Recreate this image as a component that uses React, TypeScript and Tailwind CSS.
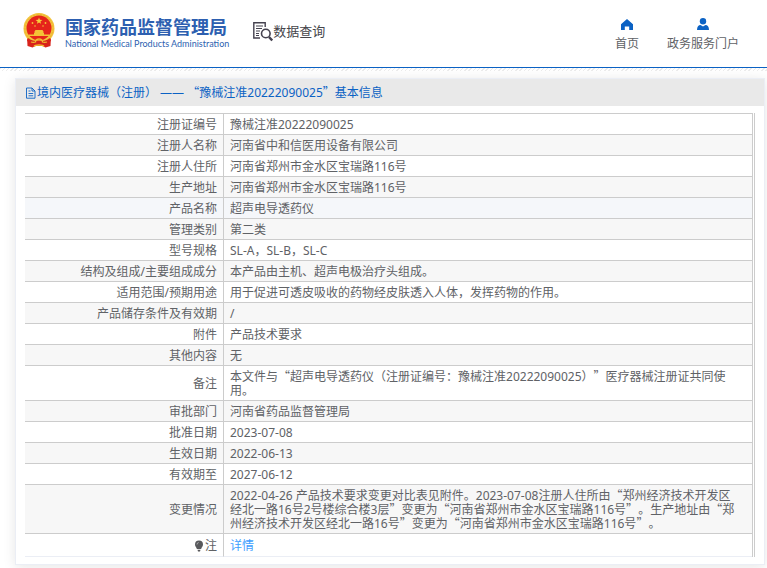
import type { ReactNode } from "react";

const CJK = "font-['Noto_Sans_CJK_SC','Noto_Sans',sans-serif]";

function Wide({ children }: { children: ReactNode }) {
  return <span className={`leading-none ${CJK}`}>{children}</span>;
}

function Emblem() {
  return (
    <svg viewBox="0 0 32 35" className="h-[35px] w-8 shrink-0" aria-hidden="true">
      <path d="M4 23h24l-.5 10-5 1.500-3-1.500h-7l-3 1.500-5-1.500z" fill="#d8231b" />
      <circle cx="16" cy="15.500" r="15.500" fill="#f3c33c" />
      <circle cx="16" cy="15.500" r="14" fill="none" stroke="#e8ad30" strokeWidth=".8" strokeDasharray="2 1.500" />
      <circle cx="16" cy="15" r="12.500" fill="#e5231b" />
      <path d="M16 4.500l.9 2.300 2.500.1-2 1.500.7 2.400-2.100-1.400-2.100 1.400.7-2.400-2-1.500 2.500-.1z" fill="#f7cf3c" />
      <g fill="#f4c136">
        <circle cx="9.500" cy="10" r=".9" />
        <circle cx="22.500" cy="10" r=".9" />
        <circle cx="12" cy="13" r=".8" />
        <circle cx="20" cy="13" r=".8" />
        <path d="M11.500 18.500l1-1.500h7l1 1.500V20h.5v1.500h5.500V23h-21v-1.500H11V20h.5z" />
      </g>
      <path d="M5 25c3 2.500 6 3 11 3s8-.5 11-3l1 3-5 2-2 2h-10l-2-2-5-2z" fill="#d8231b" />
      <path d="M16 26c2.500 0 3.500 1.500 3.500 3 1.500.5 3 .5 4.500 0M16 26c-2.500 0-3.500 1.500-3.500 3-1.500.5-3 .5-4.500 0M11 33.500c1-2 9-2 10 0" stroke="#f0b92e" strokeWidth="1.300" fill="none" />
    </svg>
  );
}

function QueryIcon() {
  return (
    <svg viewBox="0 0 20 20" className="h-5 w-5 shrink-0" fill="none" stroke="#45424f" aria-hidden="true">
      <path d="M7 16H.8V.8h11.400V5" strokeWidth="1.400" />
      <path d="M3 4h7M3 6.500h6M3 9h4M3 11.500h3M3 13.500h3" strokeWidth="1" />
      <circle cx="12.800" cy="11.500" r="4.300" strokeWidth="1.600" />
      <path d="M16 15l3.200 3.500" strokeWidth="2.400" />
    </svg>
  );
}

function DocIcon() {
  return (
    <svg viewBox="0 0 12 12" className="h-3 w-3 shrink-0" fill="none" stroke="#0b62c4" strokeWidth=".9" aria-hidden="true">
      <path d="M1.500 1h5.500l3 3v7.200H1.500zM7 1v3h3M3.500 4h2M3.500 6.500h4.700M3.500 8.800h4.700" />
    </svg>
  );
}

function BulbIcon() {
  return (
    <svg viewBox="0 0 10 12" className="mr-px inline-block h-3 w-[10px] align-[-2px]" fill="#58595c" aria-hidden="true">
      <path d="M5 .5a4 4 0 0 1 4 4c0 1.800-1.300 2.600-1.900 4.500H2.900C2.300 7.100 1 6.300 1 4.500a4 4 0 0 1 4-4zM3.500 9.800h3L6 11.500H4z" />
      <path d="M3 4.500a2 2 0 0 1 1.700-2" stroke="#ddd" strokeWidth=".6" fill="none" />
    </svg>
  );
}

const rows: { label: ReactNode; value: ReactNode; hover?: boolean }[] = [
  { label: "注册证编号", value: "豫械注准20222090025" },
  { label: "注册人名称", value: "河南省中和信医用设备有限公司" },
  { label: "注册人住所", value: "河南省郑州市金水区宝瑞路116号" },
  { label: "生产地址", value: "河南省郑州市金水区宝瑞路116号" },
  { label: "产品名称", value: "超声电导透药仪", hover: true },
  { label: "管理类别", value: "第二类" },
  { label: "型号规格", value: "SL-A，SL-B，SL-C" },
  { label: "结构及组成/主要组成成分", value: "本产品由主机、超声电极治疗头组成。" },
  { label: "适用范围/预期用途", value: "用于促进可透皮吸收的药物经皮肤透入人体，发挥药物的作用。" },
  { label: "产品储存条件及有效期", value: "/" },
  { label: "附件", value: "产品技术要求" },
  { label: "其他内容", value: "无" },
  {
    label: "备注",
    value: (
      <>
        本文件与<Wide>“</Wide>超声电导透药仪（注册证编号：豫械注准20222090025）<Wide>”</Wide>医疗器械注册证共同使用。
      </>
    ),
  },
  { label: "审批部门", value: "河南省药品监督管理局" },
  { label: "批准日期", value: "2023-07-08" },
  { label: "生效日期", value: "2022-06-13" },
  { label: "有效期至", value: "2027-06-12" },
  {
    label: "变更情况",
    value: (
      <>
        2022-04-26 产品技术要求变更对比表见附件。2023-07-08注册人住所由<Wide>“</Wide>郑州经济技术开发区经北一路16号2号楼综合楼3层<Wide>”</Wide>变更为<Wide>“</Wide>河南省郑州市金水区宝瑞路116号<Wide>”</Wide>。生产地址由<Wide>“</Wide>郑州经济技术开发区经北一路16号<Wide>”</Wide>变更为<Wide>“</Wide>河南省郑州市金水区宝瑞路116号<Wide>”</Wide>。
      </>
    ),
  },
];

export default function App() {
  return (
    <div lang="zh-CN" className="bg-white pb-1 font-['Noto_Sans','Noto_Sans_CJK_SC',sans-serif] text-xs text-[#606266] [text-spacing-trim:space-all]">
      <header className="flex h-[68px] items-start border-b border-[#0b62c4] pr-7 pl-[23px]">
        <a href="#" className="flex pt-[13px]">
          <Emblem />
          <span className="ml-[10px] flex flex-col text-[#2d5fb0]">
            <span className={`text-lg leading-[26px] font-bold whitespace-nowrap ${CJK}`}>国家药品监督管理局</span>
            <span className="font-[Lato,sans-serif] text-[9px] leading-[10px] whitespace-nowrap">
              National Medical Products Administration
            </span>
          </span>
        </a>
        <a href="#" className="ml-6 flex pt-[22px] text-[13px] leading-[18px] whitespace-nowrap text-[#45454a]">
          <QueryIcon />
          数据查询
        </a>
        <nav className="ml-auto flex gap-7 pt-[18px] leading-5 whitespace-nowrap">
          <a href="#" className="flex flex-col items-center">
            <svg viewBox="0 0 14 14" className="mb-[2px] h-[14px] w-[14px]" fill="#0b62c4" aria-hidden="true">
              <path d="M7 1l6 5.200V12H9.200V8.500H4.800V12H1V6.200z" />
            </svg>
            首页
          </a>
          <a href="#" className="flex flex-col items-center">
            <svg viewBox="0 0 14 14" className="mb-[2px] h-[14px] w-[14px]" fill="#0b62c4" aria-hidden="true">
              <circle cx="7" cy="3.200" r="3.200" />
              <path d="M1 12c0-3.500 1.500-4.800 3.500-5l2.500 1.500L9.500 7c2 .2 3.500 1.500 3.500 5z" />
            </svg>
            政务服务门户
          </a>
        </nav>
      </header>
      <div className="h-[3px] bg-[repeating-linear-gradient(135deg,#ececec_0px,#ececec_1px,#ffffff_1px,#ffffff_3px)]" />

      <main className="mt-[7px] mr-[2px] ml-[15px] border border-[#ebeef5] bg-white shadow-[0_2px_12px_0_rgba(0,0,0,0.1)]">
        <h1 className="flex h-[27px] items-center bg-[#e9e9e9] pl-[9px] font-normal text-[#0b62c4]">
          <DocIcon />
          <span>
            境内医疗器械（注册） —— <Wide>“</Wide>豫械注准20222090025<Wide>”</Wide>基本信息
          </span>
        </h1>
        <div className="mt-[7px] mr-[9px] mb-[7px] ml-[9px] border-r border-[#cccccc] pr-px">
          <table className="w-full table-fixed border-separate border-spacing-0 border-t border-r border-[#cccccc] leading-[14px]">
            <colgroup>
              <col className="w-[199px]" />
              <col />
            </colgroup>
            <tbody>
              {rows.map((row, i) => (
                <tr key={i} className={row.hover ? "bg-[#f5f7fa]" : i % 2 ? "bg-[#f7f7f7]" : "bg-white"}>
                  <th scope="row" className="border-r border-b border-[#cccccc] px-[6px] pt-1 pb-[2px] text-right font-normal">
                    {row.label}
                  </th>
                  <td className="border-b border-[#cccccc] pt-1 pr-[10px] pb-[2px] pl-[6px]">{row.value}</td>
                </tr>
              ))}
              <tr>
                <th scope="row" className="border-r border-b border-r-[#cccccc] border-b-[#ebeef5] px-[6px] pt-[5px] pb-[3px] text-right font-normal">
                  <BulbIcon />注
                </th>
                <td className="border-b border-[#ebeef5] px-[6px] pt-[5px] pb-[3px]">
                  <a href="#" className="text-[#409eff]">
                    详情
                  </a>
                </td>
              </tr>
            </tbody>
          </table>
        </div>
      </main>
    </div>
  );
}
